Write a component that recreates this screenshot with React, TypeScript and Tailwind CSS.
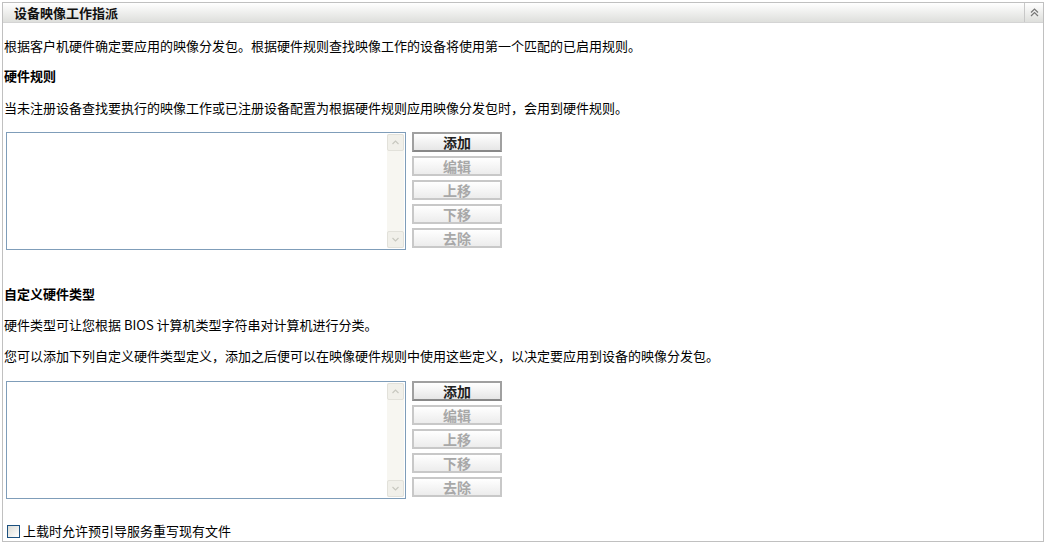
import React from 'react';

const font = { fontFamily: '"Noto Sans CJK SC", "Liberation Sans", sans-serif' };

function RuleList() {
  const buttons = ['添加', '编辑', '上移', '下移', '去除'];
  return (
    <div className="flex gap-[6px] ml-[2px]">
      <div className="w-[400px] h-[118px] border border-[#7f9db9] bg-white flex justify-end p-[1px]">
        <div className="w-[17px] h-full bg-[#f7f6f1] flex flex-col justify-between">
          <div className="h-[17px] border border-[#e2e1da] rounded-[2px] bg-[#f1f0ea] flex items-center justify-center">
            <svg width="7" height="5" viewBox="0 0 7 5">
              <path d="M0.5 4 L3.5 1 L6.5 4" stroke="#c8c8c0" strokeWidth="1.2" fill="none" />
            </svg>
          </div>
          <div className="h-[17px] border border-[#e2e1da] rounded-[2px] bg-[#f1f0ea] flex items-center justify-center">
            <svg width="7" height="5" viewBox="0 0 7 5">
              <path d="M0.5 1 L3.5 4 L6.5 1" stroke="#c8c8c0" strokeWidth="1.2" fill="none" />
            </svg>
          </div>
        </div>
      </div>
      <div className="flex flex-col gap-[4px]">
        {buttons.map((b, i) => (
          <div
            key={b}
            className={
              i === 0
                ? 'w-[90px] h-[20px] border-2 border-t-[#a0a0a0] border-l-[#a0a0a0] border-r-[#a0a0a0] border-b-[#888] bg-gradient-to-b from-white to-[#e6e6e6] flex items-center justify-center text-[14px] font-bold text-[#222] leading-none'
                : 'w-[90px] h-[20px] border-2 border-[#c8c8c8] bg-gradient-to-b from-white to-[#ececec] flex items-center justify-center text-[14px] font-bold text-[#a8a8a8] leading-none'
            }
          >
            {b}
          </div>
        ))}
      </div>
    </div>
  );
}

export default function App() {
  return (
    <div className="w-[1050px] h-[547px] bg-white pt-[2px] pl-[2px]" style={font}>
      <div className="w-[1042px] h-[540px] border border-[#c0c0c0] flex flex-col">
        <div className="h-[20px] flex bg-gradient-to-b from-white to-[#dedfdc] border-b border-[#d4d4d4]">
          <div className="flex-1 pl-[11px] flex items-center text-[13px] font-bold text-[#111] leading-none">
            设备映像工作指派
          </div>
          <div className="w-[19px] border-l border-[#c8c8c8] flex items-center justify-center">
            <svg width="9" height="9" viewBox="0 0 9 9">
              <path d="M1 4.5 L4.5 1 L8 4.5 M1 8 L4.5 4.5 L8 8" stroke="#777" strokeWidth="1.2" fill="none" />
            </svg>
          </div>
        </div>
        <div className="pl-[1px] text-[13px] text-black leading-[16px]">
          <p className="mt-[15px]">根据客户机硬件确定要应用的映像分发包。根据硬件规则查找映像工作的设备将使用第一个匹配的已启用规则。</p>
          <p className="mt-[14px] font-bold">硬件规则</p>
          <p className="mt-[16px]">当未注册设备查找要执行的映像工作或已注册设备配置为根据硬件规则应用映像分发包时，会用到硬件规则。</p>
          <div className="mt-[16px]">
            <RuleList />
          </div>
          <p className="mt-[36px] font-bold">自定义硬件类型</p>
          <p className="mt-[15px]">硬件类型可让您根据 BIOS 计算机类型字符串对计算机进行分类。</p>
          <p className="mt-[15px]">您可以添加下列自定义硬件类型定义，添加之后便可以在映像硬件规则中使用这些定义，以决定要应用到设备的映像分发包。</p>
          <div className="mt-[17px]">
            <RuleList />
          </div>
          <div className="mt-[24px] ml-[3px] flex items-center gap-[3px]">
            <div className="w-[13px] h-[13px] border border-[#1c5180] bg-gradient-to-br from-[#dcdcd6] to-white" />
            <span>上载时允许预引导服务重写现有文件</span>
          </div>
        </div>
      </div>
    </div>
  );
}
